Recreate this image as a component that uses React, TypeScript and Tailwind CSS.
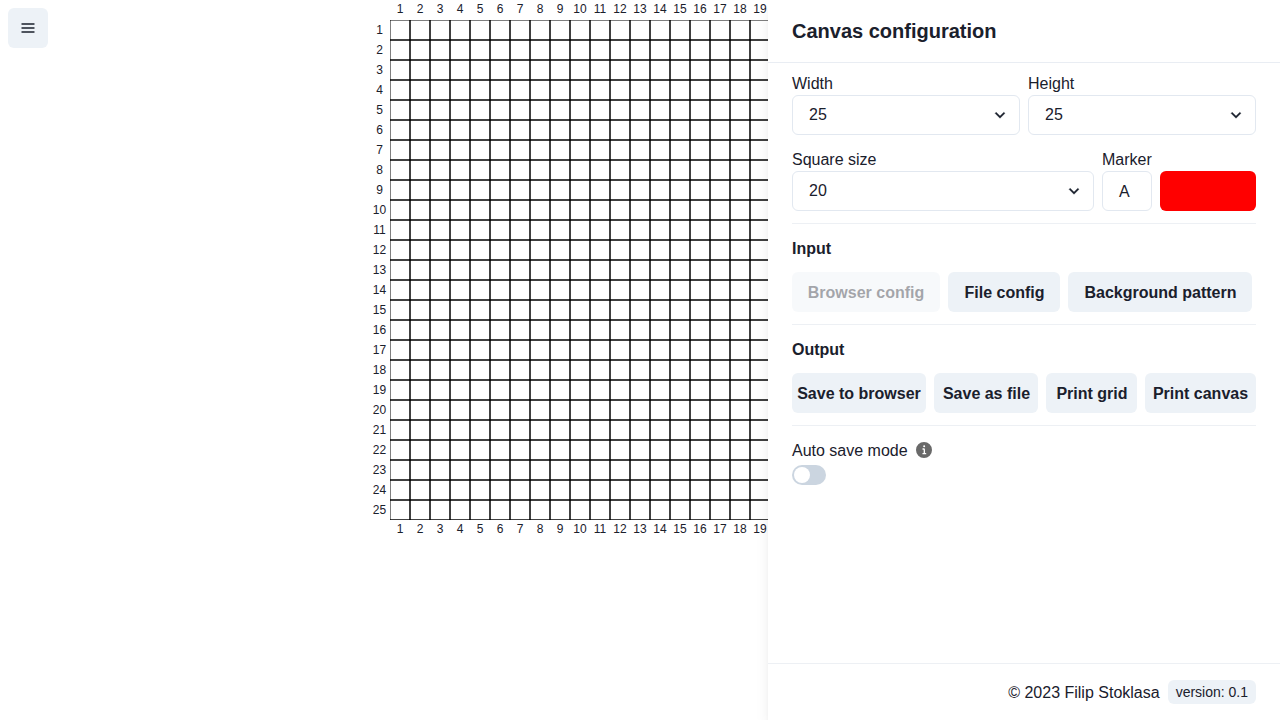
import React from 'react';

const SIZE = 25;
const CELL = 20;
const indexes = Array.from({ length: SIZE }, (_, i) => i);

function ColumnLabels() {
  return (
    <div className="ml-[22px] flex h-5 text-xs leading-[18px]">
      {indexes.map((i) => (
        <span key={i} className="w-5 shrink-0 text-center">{i + 1}</span>
      ))}
    </div>
  );
}

function Grid() {
  return (
    <div className="ml-[368px] w-[522px] shrink-0">
      <ColumnLabels />
      <div className="flex">
        <div className="flex w-[22px] flex-col pl-px text-xs leading-5">
          {indexes.map((i) => (
            <span key={i} className="h-5 text-center">{i + 1}</span>
          ))}
        </div>
        <svg width={SIZE * CELL} height={SIZE * CELL} className="block overflow-hidden">
          {indexes.map((r) =>
            indexes.map((c) => (
              <rect key={`${r}-${c}`} x={c * CELL} y={r * CELL} width={CELL} height={CELL} fill="none" stroke="black" strokeWidth={1} />
            )),
          )}
          <line x1={0} x2={SIZE * CELL} y1={SIZE * CELL} y2={SIZE * CELL} stroke="black" strokeWidth={1} />
        </svg>
      </div>
      <ColumnLabels />
    </div>
  );
}

function Select({ label, value, className }: { label: string; value: string; className: string }) {
  return (
    <div className={className}>
      <div className="h-6 pt-px">{label}</div>
      <button className="flex h-10 w-full items-center justify-between rounded-md border border-[#e2e8f0] pr-[9px] pl-4">
        <span className="pb-px">{value}</span>
        <svg viewBox="0 0 24 24" className="h-5 w-5" fill="currentColor" stroke="currentColor" strokeWidth={0.35}>
          <path d="M16.59 8.59L12 13.17 7.41 8.59 6 10l6 6 6-6z" />
        </svg>
      </button>
    </div>
  );
}

function Button({ children, className, disabled }: { children: React.ReactNode; className: string; disabled?: boolean }) {
  return (
    <button
      disabled={disabled}
      className={`flex h-10 shrink-0 items-center justify-center rounded-md bg-[#edf2f7] pt-0.5 font-semibold whitespace-nowrap disabled:opacity-40 ${className}`}
    >
      {children}
    </button>
  );
}

function Divider() {
  return <div className="h-px shrink-0 bg-[#edf0f4]" />;
}

export default function App() {
  return (
    <div className="relative h-screen w-screen overflow-hidden bg-white font-['Liberation_Sans',Arial,sans-serif] text-base text-[#1a202c]">
      <Grid />
      <button aria-label="Menu" className="absolute top-2 left-2 flex h-10 w-10 items-center justify-center rounded-md bg-[#edf2f7]">
        <svg viewBox="0 0 24 24" className="h-4 w-4" fill="currentColor">
          <path d="M 3 5 A 1.0001 1.0001 0 1 0 3 7 L 21 7 A 1.0001 1.0001 0 1 0 21 5 L 3 5 z M 3 11 A 1.0001 1.0001 0 1 0 3 13 L 21 13 A 1.0001 1.0001 0 1 0 21 11 L 3 11 z M 3 17 A 1.0001 1.0001 0 1 0 3 19 L 21 19 A 1.0001 1.0001 0 1 0 21 17 L 3 17 z" />
        </svg>
      </button>
      <aside className="absolute inset-y-0 right-0 flex w-[512px] flex-col bg-white shadow-[0_10px_15px_-3px_rgba(0,0,0,0.1),0_4px_6px_-2px_rgba(0,0,0,0.05)]">
        <header className="h-[63px] border-b border-[#e9edf3] px-6 pt-4 text-xl leading-[30px] font-semibold">Canvas configuration</header>
        <main className="flex flex-1 flex-col gap-3 px-6 pt-2">
          <div className="flex gap-2">
            <Select label="Width" value="25" className="flex-1" />
            <Select label="Height" value="25" className="flex-1" />
          </div>
          <div className="flex items-end gap-2">
            <Select label="Square size" value="20" className="flex-1" />
            <div className="w-[50px]">
              <div className="h-6 pt-px">Marker</div>
              <div className="flex h-10 items-center rounded-md border border-[#e2e8f0] pt-0.5 pl-4">A</div>
            </div>
            <div className="h-10 w-24 rounded-md bg-[#ff0000]" />
          </div>
          <Divider />
          <h2 className="h-6 pt-px font-semibold">Input</h2>
          <div className="flex gap-2">
            <Button disabled className="w-[148px]">Browser config</Button>
            <Button className="w-28 pl-px">File config</Button>
            <Button className="w-[184px] pl-px">Background pattern</Button>
          </div>
          <Divider />
          <h2 className="h-6 pt-px font-semibold">Output</h2>
          <div className="flex gap-2">
            <Button className="w-[134px]">Save to browser</Button>
            <Button className="w-[104px] pl-px">Save as file</Button>
            <Button className="w-[91px] pl-px">Print grid</Button>
            <Button className="w-[111px]">Print canvas</Button>
          </div>
          <Divider />
          <div>
            <div className="flex h-6 items-center gap-2">
              <span className="pt-0.5">Auto save mode</span>
              <svg viewBox="0 0 24 24" className="h-4 w-4 text-[#696969]" fill="currentColor">
                <path d="M12,0A12,12,0,1,0,24,12,12.013,12.013,0,0,0,12,0Zm.25,5a1.5,1.5,0,1,1-1.5,1.5A1.5,1.5,0,0,1,12.25,5ZM14.5,18.5h-4a1,1,0,0,1,0-2h.75a.25.25,0,0,0,.25-.25v-4.5a.25.25,0,0,0-.25-.25H10.5a1,1,0,0,1,0-2h1a2,2,0,0,1,2,2v4.75a.25.25,0,0,0,.25.25h.75a1,1,0,1,1,0,2Z" />
              </svg>
            </div>
            <div className="mt-[3px] h-5 w-[34px] rounded-full bg-[#cbd5e0] p-0.5">
              <div className="h-4 w-4 rounded-full bg-white" />
            </div>
          </div>
        </main>
        <footer className="flex h-[57px] items-center justify-end gap-2 border-t border-[#edf0f4] px-6">
          <span className="pt-0.5">© 2023 Filip Stoklasa</span>
          <span className="flex h-6 items-center rounded-md bg-[#edf2f7] px-2 text-sm">version: 0.1</span>
        </footer>
      </aside>
    </div>
  );
}
